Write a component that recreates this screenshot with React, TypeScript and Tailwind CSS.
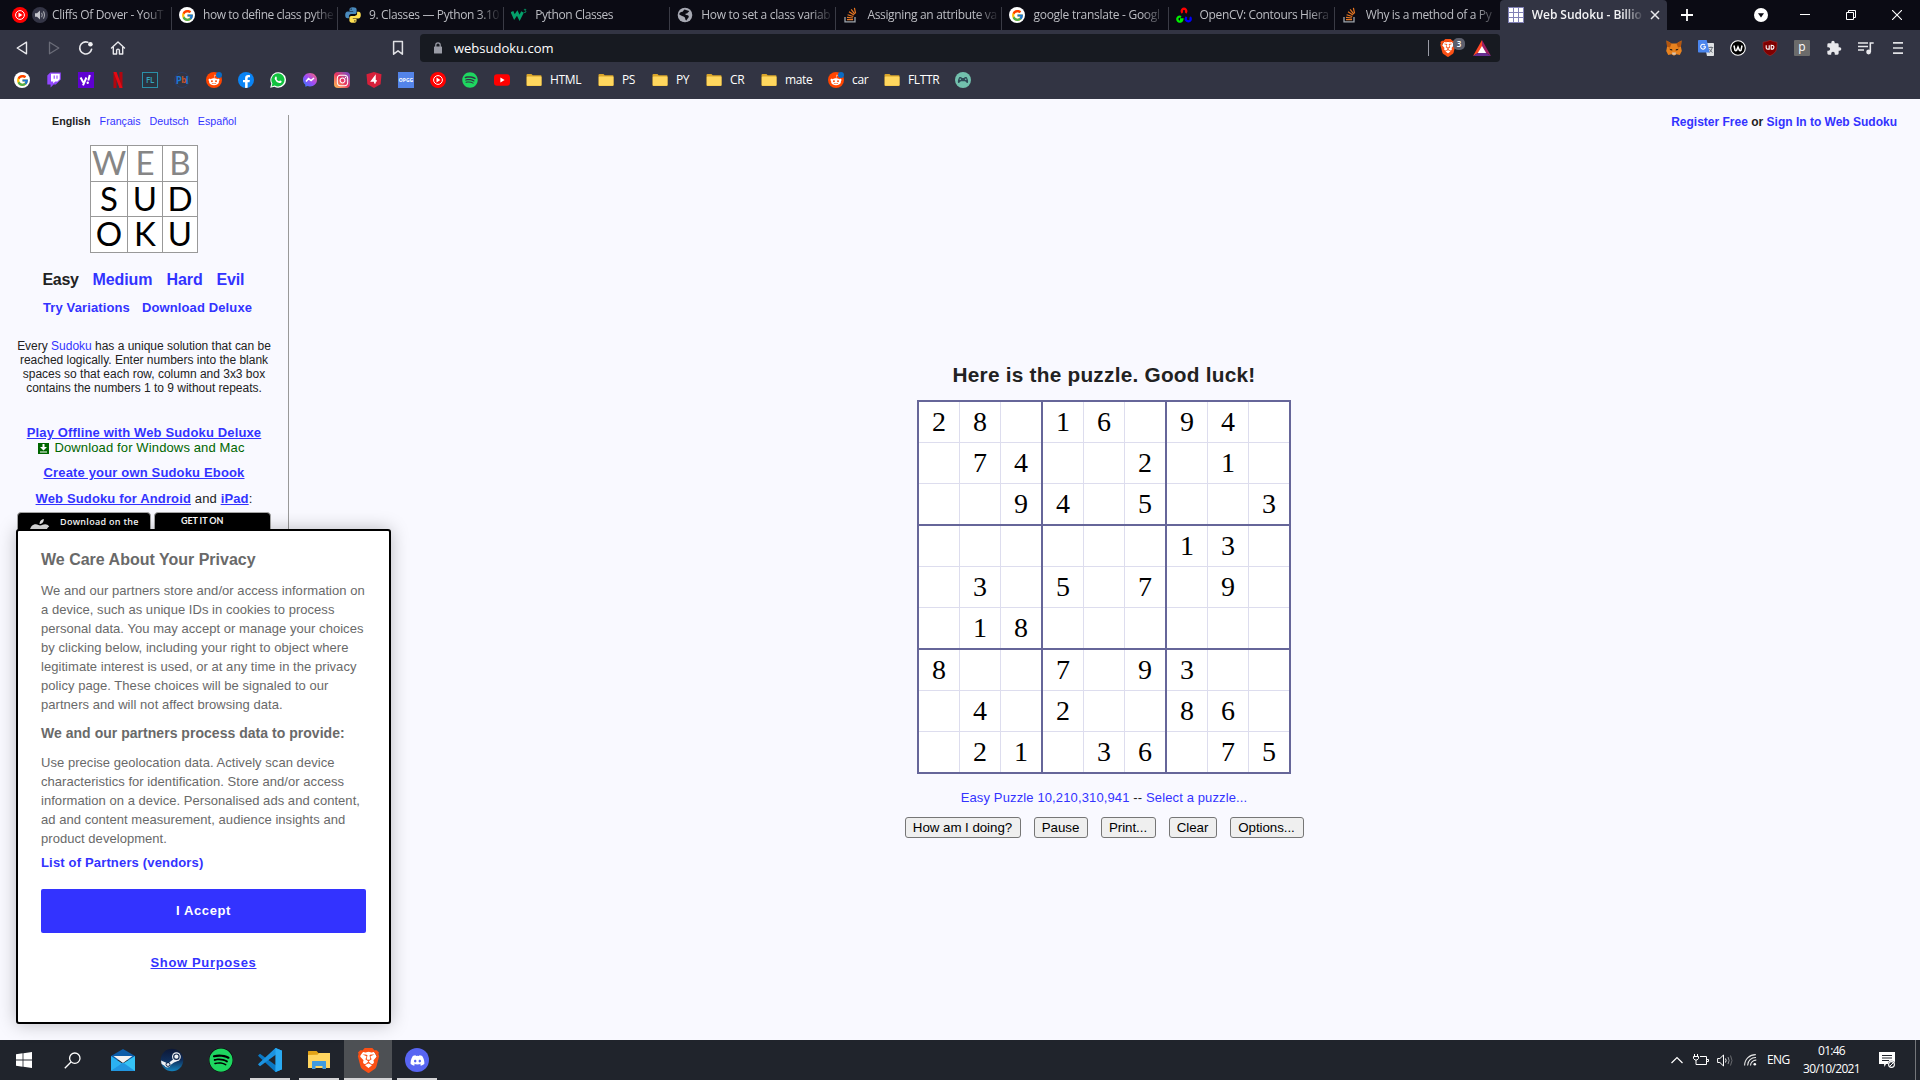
import type { ReactNode } from "react";
import { FcGoogle } from "react-icons/fc";
import {
  FaDiscord,
  FaFacebookF,
  FaInstagram,
  FaRedditAlien,
  FaSpotify,
  FaWhatsapp,
} from "react-icons/fa";
import { SiBrave } from "react-icons/si";

/* ---------- small icons ---------- */

const GoogleIcon = () => (
  <span className="flex size-4 items-center justify-center rounded-full bg-white">
    <FcGoogle size={13} />
  </span>
);

const YtMusicIcon = () => (
  <svg width="16" height="16" viewBox="0 0 16 16">
    <circle cx="8" cy="8" r="8" fill="#f00" />
    <circle cx="8" cy="8" r="4.400" fill="none" stroke="#fff" strokeWidth="1" />
    <path d="M6.500 5.600v4.800L10.400 8z" fill="#fff" />
  </svg>
);

const MutedSpeaker = () => (
  <svg width="16" height="16" viewBox="0 0 16 16">
    <circle cx="8" cy="8" r="8" fill="#343546" />
    <path d="M3 6.300h2L8 3.600v8.800L5 9.700H3z" fill="#c6c7cd" />
    <path d="M9.600 5.800q1.400 2.200 0 4.400M11.400 4.400q2.200 3.600 0 7.200" stroke="#a5a6ae" strokeWidth="1.100" fill="none" />
  </svg>
);

const PythonIcon = () => (
  <svg width="16" height="16" viewBox="0 0 16 16">
    <path d="M7.9.2C5 .2 4.500 1.400 4.500 2.300v1.700H8.200v.6H2.600C1.200 4.600.2 5.800.2 8s.9 3.300 2.200 3.300h1.500V9.400c0-1.300 1-2.300 2.300-2.300h3.600c1 0 1.800-.9 1.800-1.900V2.300C11.600 1.100 10.300.2 7.900.2zM6.100 1.400a.7.700 0 110 1.400.7.700 0 010-1.400z" fill="#4b8bbe" />
    <path d="M8.100 15.800c2.900 0 3.400-1.200 3.400-2.100V12H7.800v-.6h5.600c1.400 0 2.400-1.200 2.400-3.400s-.9-3.300-2.200-3.300h-1.500v1.900c0 1.300-1 2.300-2.300 2.300H6.200c-1 0-1.800.9-1.800 1.900v2.900c0 1.200 1.300 2.100 3.700 2.100zm1.800-1.200a.7.700 0 110-1.400.7.700 0 010 1.400z" fill="#ffe052" />
  </svg>
);

const W3Icon = () => (
  <svg width="16" height="16" viewBox="0 0 16 16">
    <path d="M1 4.600l2.400 5.400 2.800-4 2.400 4.800L11.500 5" fill="none" stroke="#04a06a" strokeWidth="2.900" />
    <path d="M12.900 2.400h2l-1 1.300q1.300.1 1.100 1.100-.4 1.100-2.100.6" fill="none" stroke="#04a06a" strokeWidth=".8" />
  </svg>
);

const GlobeIcon = () => (
  <svg width="16" height="16" viewBox="0 0 16 16">
    <circle cx="8" cy="8" r="7.300" fill="#a7a9b3" />
    <path d="M7.500 2.600C9 3 10.600 3.500 12.200 4.100c-.4 1.300-1.600 1.200-2 2.400-1.400-.2-2 .2-1.600 1.200 1.700.1 3.200.4 3.200 1.800-.2 1.800-1.900 2.300-2.400 4-1.400-.2-.9-1.900-1.700-3.200C6.400 9.300 3.900 8.800 2.300 7.600c.1-2.800 2.600-2.300 3.500-3 .4-.7 1-1.200 1.700-2z" fill="#0b0b14" />
  </svg>
);

const StackOverflowIcon = () => (
  <svg width="16" height="16" viewBox="0 0 16 16">
    <path d="M2 10v4.800h10V10" fill="none" stroke="#9fa6ac" strokeWidth="1.300" />
    <path d="M4 12.600h6M4 10.300l6 .7M4.600 7.700l5.700 1.800M6 4.800l5 3.300M8.200 2.400l3.600 4.700M11.400.8l1.200 5.500" stroke="#e87722" strokeWidth="1.200" />
  </svg>
);

const OpenCvIcon = () => (
  <svg width="16" height="16" viewBox="0 0 16 16" fill="none" strokeWidth="2.300">
    <path d="M6.500 5.800a2.300 2.300 0 113 0" stroke="#f00" />
    <path d="M5 9.900a2.500 2.500 0 101.300 2.600H4" stroke="#0e0" />
    <path d="M10.600 10a2.500 2.500 0 103.400.1" stroke="#00f" />
  </svg>
);

const SudokuFavicon = () => (
  <svg width="16" height="16" viewBox="0 0 16 16">
    <path d="M0 0h16v16H0z" fill="#8080b5" />
    <g fill="#fff">
      {[1, 6, 11].map((y) => [1, 6, 11].map((x) => <rect key={`${x}-${y}`} x={x} y={y} width="4" height="4" />))}
    </g>
  </svg>
);

const Folder = () => (
  <svg width="16" height="16" viewBox="0 0 16 16">
    <path d="M.5 3q0-1 1-1h4l1.200 1.200h8q.8 0 .8.800v9.200q0 .8-.8.800H1.300q-.8 0-.8-.8z" fill="#d9a52a" />
    <path d="M.8 5q0-.6.7-.6h13.200q.8 0 .8.600v8q0 .8-.8.800H1.500q-.7 0-.7-.8z" fill="#ffd75e" />
  </svg>
);

const RedditIcon = () => (
  <span className="relative flex size-4 items-center justify-center rounded-full bg-[#ff4500]">
    <FaRedditAlien size={12} color="#fff" />
    <span className="absolute top-0 right-0 size-[6px] rounded-full bg-[#0a6cc4]" />
  </span>
);

const TwitchIcon = () => (
  <svg width="16" height="16" viewBox="0 0 16 16">
    <path d="M4.300.5L1.300 3.400v9.200h3.300v3l3-3h2.200l5-5V.5z" fill="#9146ff" />
    <path d="M5 1.700h8.700v5.500l-2.200 2.200H9.200l-2 2v-2H5z" fill="#fff" />
    <path d="M8.200 3.600v3.200M11 3.600v3.200" stroke="#9146ff" strokeWidth="1.100" />
  </svg>
);

const YahooIcon = () => (
  <svg width="16" height="16" viewBox="0 0 16 16">
    <path d="M0 0h16v16H0z" fill="#5f01d1" />
    <path d="M2.600 5.500l2.700 5M8.400 5.500L5 13.300" stroke="#fff" strokeWidth="2" />
    <path d="M11.800 3l-1.500 5.500" stroke="#fff" strokeWidth="2" />
    <circle cx="9.700" cy="10.700" r="1.200" fill="#fff" />
  </svg>
);

const NetflixIcon = () => (
  <svg width="16" height="16" viewBox="0 0 16 16">
    <path d="M3.500 0h3v16h-3zM9.500 0h3v16h-3z" fill="#b1060f" />
    <path d="M3.500 0h3l6 16h-3z" fill="#e50914" />
  </svg>
);

const PbiIcon = () => (
  <span className="flex size-4 items-center justify-center rounded-full border border-[#2b3d63] font-['Open_Sans'] text-[10px] leading-none font-bold tracking-[-0.8px] text-[#1b78d4]">
    P<span className="text-[8px] text-[#c8552b]">b</span>I
  </span>
);

const WhatsAppIcon = () => (
  <svg width="16" height="16" viewBox="0 0 16 16">
    <path d="M.2 15.800l1.100-4.100A7.800 7.800 0 118.100 15.800a7.900 7.900 0 01-3.700-1z" fill="#fff" />
    <path d="M1.600 14.400l.8-2.900A6.600 6.600 0 118.100 14.500a6.600 6.600 0 01-3.300-.9z" fill="#12c23f" />
    <path d="M5.700 4.400q.5-.2.700.3l.5 1.200q.1.300-.5 1 .9 1.700 2.700 2.300.7-.9 1-.8l1.400.7q.3.500-.2 1.300-.9.900-2.100.6-3.300-.9-4.500-4-.2-1.600 1-2.600z" fill="#fff" />
  </svg>
);

const MessengerIcon = () => (
  <svg width="16" height="16" viewBox="0 0 16 16">
    <defs>
      <linearGradient id="msg" x1="0" y1="1" x2="1" y2="0">
        <stop offset="0" stopColor="#2a7cff" />
        <stop offset=".5" stopColor="#a24bf5" />
        <stop offset="1" stopColor="#ff6a70" />
      </linearGradient>
    </defs>
    <path d="M8 1C4 1 1 3.900 1 7.700c0 2 .8 3.700 2.200 4.900l.2 2.200 2-.8c.8.300 1.700.4 2.600.4 4 0 7-2.900 7-6.700S12 1 8 1z" fill="url(#msg)" />
    <path d="M4 9.600l2.500-3 2.600 2L12 6" fill="none" stroke="#fff" strokeWidth="1.500" />
  </svg>
);

const InstagramIcon = () => (
  <span className="flex size-4 items-center justify-center rounded bg-linear-to-bl from-[#6a3fd0] via-[#e8305f] to-[#fdc44d]">
    <FaInstagram size={13} color="#fff" />
  </span>
);

const FourShield = () => (
  <svg width="16" height="16" viewBox="0 0 16 16">
    <path d="M8 0l7.500 2.300-.9 10L8 16l-6.600-3.700-.9-10z" fill="#d6203a" />
    <path d="M8.900 11.400V4.900L5.900 8.900h4.800" fill="none" stroke="#fff" strokeWidth="1.700" />
  </svg>
);

const YoutubeIcon = () => (
  <svg width="16" height="16" viewBox="0 0 16 16">
    <rect y="2.300" width="16" height="11.400" rx="3" fill="#f00" />
    <path d="M6.400 5.600v4.800L10.600 8z" fill="#fff" />
  </svg>
);

const GamepadIcon = () => (
  <svg width="16" height="16" viewBox="0 0 16 16">
    <circle cx="8" cy="8" r="8" fill="#72c0ad" />
    <path d="M4.500 5h1.800l.5.900h2.400l.5-.9h1.800c1.500 1.800 2.200 5.600 1 6-1.200.2-1.600-1.700-2.700-1.700H6.200C5.100 9.300 4.700 11.200 3.500 11c-1.200-.4-.5-4.200 1-6z" fill="#2f4a57" />
    <circle cx="5.300" cy="7.300" r=".8" fill="#72c0ad" />
    <circle cx="10.700" cy="7.300" r=".8" fill="#72c0ad" />
  </svg>
);

const BraveLogo = ({ size }: { size: number }) => (
  <span className="relative flex items-center justify-center">
    <svg className="absolute" width={size * 0.7} height={size * 0.8} viewBox="0 0 14 16">
      <path d="M2 1h10l2 4-3 8-4 3-4-3-3-8z" fill="#fff" />
    </svg>
    <SiBrave className="relative" size={size} color="#fb5015" />
  </span>
);

/* ---------- tab strip ---------- */

const tabs: { icon: ReactNode; title: string; ls: string }[] = [
  { icon: <GoogleIcon />, title: "how to define class pythe", ls: "tracking-[-0.46px]" },
  { icon: <PythonIcon />, title: "9. Classes — Python 3.10", ls: "tracking-[-0.37px]" },
  { icon: <W3Icon />, title: "Python Classes", ls: "tracking-[-0.41px]" },
  { icon: <GlobeIcon />, title: "How to set a class variab", ls: "tracking-[-0.33px]" },
  { icon: <StackOverflowIcon />, title: "Assigning an attribute va", ls: "tracking-[-0.33px]" },
  { icon: <GoogleIcon />, title: "google translate - Googl", ls: "tracking-[-0.27px]" },
  { icon: <OpenCvIcon />, title: "OpenCV: Contours Hiera", ls: "tracking-[-0.35px]" },
  { icon: <StackOverflowIcon />, title: "Why is a method of a Py", ls: "tracking-[-0.35px]" },
];

const fade = "[mask-image:linear-gradient(to_right,black_82%,transparent)]";

function TabStrip() {
  return (
    <div className="flex h-[30px] bg-[#0b0b14] text-xs text-[#bcbdc3]">
      <div className="flex w-[171px] items-center pl-3">
        <YtMusicIcon />
        <span className="ml-1">
          <MutedSpeaker />
        </span>
        <span className={`ml-1 w-[114px] overflow-hidden tracking-[-0.33px] whitespace-nowrap ${fade}`}>Cliffs Of Dover - YouT</span>
      </div>
      {tabs.map((t) => (
        <div key={t.title} className="flex w-[166.1px] items-center">
          <span className="mt-[7px] h-[23px] w-px bg-[#3a3b45]" />
          <span className="ml-[7px]">{t.icon}</span>
          <span className={`ml-2 w-[133px] overflow-hidden whitespace-nowrap ${t.ls} ${fade}`}>{t.title}</span>
        </div>
      ))}
      <div className="flex w-[167px] items-center rounded-t bg-[#323443] pl-2">
        <SudokuFavicon />
        <span className={`ml-2 w-[112px] overflow-hidden font-semibold tracking-[-0.06px] whitespace-nowrap text-[#f2f2f4] ${fade}`}>Web Sudoku - Billio</span>
        <svg className="ml-[6px]" width="10" height="10" viewBox="0 0 10 10">
          <path d="M1 1l8 8M9 1L1 9" stroke="#e8e8ec" strokeWidth="1.500" />
        </svg>
      </div>
      <div className="flex flex-1 items-center">
        <svg className="ml-[14px]" width="12" height="12" viewBox="0 0 12 12">
          <path d="M6 0v12M0 6h12" stroke="#fff" strokeWidth="1.800" />
        </svg>
        <svg className="ml-[61px]" width="14" height="14" viewBox="0 0 14 14">
          <circle cx="7" cy="7" r="7" fill="#fff" />
          <path d="M4 5.200h6L7 9.400z" fill="#0b0b14" />
        </svg>
        <svg className="ml-8" width="10" height="10" viewBox="0 0 10 10">
          <path d="M0 4.500h10" stroke="#fff" />
        </svg>
        <svg className="ml-9" width="10" height="10" viewBox="0 0 10 10" fill="none" stroke="#fff">
          <path d="M.5 2.500h7v7h-7zM2.500 2.500v-2h7v7h-2" />
        </svg>
        <svg className="ml-9" width="10" height="10" viewBox="0 0 10 10">
          <path d="M0 0l10 10M10 0L0 10" stroke="#fff" strokeWidth="1.100" />
        </svg>
      </div>
    </div>
  );
}

/* ---------- toolbar ---------- */

function Toolbar() {
  return (
    <div className="flex h-9 items-center">
      <svg className="ml-[14px]" width="16" height="16" viewBox="0 0 16 16">
        <path d="M12.500 2.200v11.600L3.200 8z" fill="none" stroke="#e8e8ec" strokeWidth="1.400" strokeLinejoin="round" />
      </svg>
      <svg className="ml-4" width="16" height="16" viewBox="0 0 16 16">
        <path d="M3.500 2.200v11.600L12.800 8z" fill="none" stroke="#6a6c78" strokeWidth="1.300" strokeLinejoin="round" />
      </svg>
      <svg className="ml-4" width="16" height="16" viewBox="0 0 16 16">
        <path d="M9.800 2.300a6 6 0 103.800 7" fill="none" stroke="#e8e8ec" strokeWidth="1.600" strokeLinecap="round" />
        <circle cx="12.400" cy="4.200" r="2.300" fill="#f2f2f4" />
      </svg>
      <svg className="ml-4" width="16" height="16" viewBox="0 0 16 16">
        <path d="M1.500 8L8 2l6.500 6M3.300 7v7h3.300v-3.500a1.400 1.400 0 012.800 0V14h3.300V7" fill="none" stroke="#e8e8ec" strokeWidth="1.400" strokeLinejoin="round" strokeLinecap="round" />
      </svg>
      <svg className="ml-[264px]" width="16" height="16" viewBox="0 0 16 16">
        <path d="M3.600 1.600h8.800v12.600L8 10.800l-4.400 3.400z" fill="none" stroke="#e0e0e4" strokeWidth="1.500" strokeLinejoin="round" />
      </svg>
      <div className="ml-[14px] flex h-7 w-[1080px] items-center rounded bg-[#171a21]">
        <svg className="ml-[14px]" width="8" height="12" viewBox="0 0 8 12">
          <path d="M1.800 5V3a2.200 2.200 0 014.400 0v2" fill="none" stroke="#9a9ca6" strokeWidth="1.200" />
          <rect y="4.500" width="8" height="7" rx=".6" fill="#9a9ca6" />
        </svg>
        <span className="mt-px ml-3 text-[13px] text-white">websudoku.com</span>
        <span className="ml-auto h-4 w-px bg-[#9a9ca6]" />
        <span className="relative ml-[10px] flex">
          <BraveLogo size={18} />
          <span className="absolute -top-[1px] left-[14px] flex size-3 items-center justify-center rounded-[5px] bg-[#5c5f6c] text-[8px] leading-none font-semibold text-white">3</span>
        </span>
        <svg className="mr-[9px] ml-4" width="18" height="16" viewBox="0 0 18 16">
          <path d="M9 0L0 16l9-5.500z" fill="#ff4724" />
          <path d="M9 0l9 16-9-5.500z" fill="#9e1f63" />
          <path d="M0 16h18l-9-5.500z" fill="#662d91" />
          <path d="M9 6l4.200 7H4.800z" fill="#fff" />
        </svg>
      </div>
      <div className="mr-[14px] ml-auto flex gap-4">
        <svg width="16" height="16" viewBox="0 0 16 16">
          <path d="M.5.5l5 3h5l5-3-.6 6 .9 4.500-2 4-3.300-.8L8 15.800l-2.500-1.600-3.300.8-2-4 .9-4.500z" fill="#e8821e" />
          <path d="M.5.5l5 3L4 7.500 1 6.700zM15.500.5l-5 3L12 7.500l3-.8z" fill="#b4560f" />
          <path d="M3.300 8.700l2.800.5.300 1.300-1.800-.2zM12.700 8.700l-2.800.5-.3 1.300 1.800-.2z" fill="#1f1a17" />
          <path d="M6 12.500h4l-.5 2.300h-3z" fill="#d9c3b0" />
        </svg>
        <svg width="16" height="16" viewBox="0 0 16 16">
          <path d="M6 3h9.200q.8 0 .8.800V15.200q0 .8-.8.800H9z" fill="#dfe1e4" />
          <path d="M.8 0h7.900l3 12.500H.8q-.8 0-.8-.8V.8Q0 0 .8 0z" fill="#4b86ee" />
          <path d="M7 5.200a2.400 2.400 0 10.500 1.500H5.300" fill="none" stroke="#fff" strokeWidth="1.100" />
          <path d="M10.500 7.500h4.700M13 6.500v1M14.300 7.500q-.5 3-3 5M11.500 9q1 2.300 3 3.500" stroke="#6e737b" fill="none" />
        </svg>
        <svg width="16" height="16" viewBox="0 0 16 16">
          <circle cx="8" cy="8" r="7.300" fill="#000" stroke="#fff" strokeWidth="1.100" />
          <path d="M4 5.500l1 4.800q.8 1 1.600 0L8 7l1.400 3.300q.8 1 1.600 0l1-4.800" fill="none" stroke="#fff" strokeWidth="1.500" />
        </svg>
        <svg width="16" height="16" viewBox="0 0 16 16">
          <path d="M8 .3Q11.500 2 15 2.200q.3 6-1.200 9Q12 14.200 8 15.800q-4-1.600-5.800-4.600Q.7 8.200 1 2.200 4.500 2 8 .3z" fill="#800000" stroke="#a33" strokeWidth=".5" />
          <path d="M4.200 5.200V8q0 1.100 1.600 1.100H7.200V5.200M9.200 5.200v3.900q2.700.2 2.700-2 0-2-2.700-1.900z" fill="none" stroke="#fff" strokeWidth="1.100" />
        </svg>
        <span className="flex size-4 items-center justify-center rounded-[1px] bg-[#6b6b6b] pb-[2px] text-xs leading-none text-white">p</span>
        <svg width="16" height="16" viewBox="0 0 24 24">
          <path d="M20.500 11H19V7a2 2 0 00-2-2h-4V3.500a2.500 2.500 0 00-5 0V5H4a2 2 0 00-2 2v3.800h1.500a2.700 2.700 0 010 5.400H2V20a2 2 0 002 2h3.800v-1.500a2.700 2.700 0 015.400 0V22H17a2 2 0 002-2v-4h1.500a2.500 2.500 0 000-5z" fill="#e8e8ec" />
        </svg>
        <svg width="16" height="16" viewBox="0 0 16 16">
          <path d="M0 3h10M0 6.500h10M0 10h6" stroke="#e8e8ec" strokeWidth="1.500" />
          <path d="M12.300 12V3h3.400" fill="none" stroke="#e8e8ec" strokeWidth="1.600" />
          <circle cx="10.600" cy="12" r="2.400" fill="#e8e8ec" />
        </svg>
        <svg width="16" height="16" viewBox="0 0 16 16">
          <path d="M3 2.800h10M3 8h10M3 13.200h10" stroke="#e0e0e4" strokeWidth="1.700" />
        </svg>
      </div>
    </div>
  );
}

/* ---------- bookmarks ---------- */

const bookmarkIcons: ReactNode[] = [
  <GoogleIcon />,
  <TwitchIcon />,
  <YahooIcon />,
  <NetflixIcon />,
  <span className="flex size-4 items-center justify-center border border-[#2b90a8] bg-[#2a3340] text-[8px] leading-none font-semibold text-[#35a5be]">FL</span>,
  <PbiIcon />,
  <RedditIcon />,
  <span className="flex size-4 items-end justify-center overflow-hidden rounded-full bg-[#0a84f5]">
    <FaFacebookF size={13} color="#fff" />
  </span>,
  <WhatsAppIcon />,
  <MessengerIcon />,
  <InstagramIcon />,
  <FourShield />,
  <span className="flex size-4 items-center justify-center bg-[#5383e8] text-[5px] leading-none font-bold tracking-[0px] text-white">OPGG</span>,
  <YtMusicIcon />,
  <FaSpotify size={16} color="#1ed760" />,
  <YoutubeIcon />,
];

const folders: { name: string; w: string; reddit?: boolean }[] = [
  { name: "HTML", w: "w-[72px]" },
  { name: "PS", w: "w-[54px]" },
  { name: "PY", w: "w-[54px]" },
  { name: "CR", w: "w-[55px]" },
  { name: "mate", w: "w-[67px]" },
  { name: "car", w: "w-[56px]", reddit: true },
  { name: "FLTTR", w: "w-[71px]" },
];

function Bookmarks() {
  return (
    <div className="flex h-[33px] items-center pb-[5px] pl-[14px] text-xs tracking-[-0.35px] text-white">
      <div className="mr-4 flex gap-4">
        {bookmarkIcons.map((icon, i) => (
          <span key={i} className="flex size-4 items-center justify-center">
            {icon}
          </span>
        ))}
      </div>
      {folders.map((f) => (
        <span key={f.name} className={`flex items-center gap-2 ${f.w}`}>
          {f.reddit ? <RedditIcon /> : <Folder />}
          {f.name}
        </span>
      ))}
      <GamepadIcon />
    </div>
  );
}

/* ---------- page ---------- */

const logo = ["WEB", "SUD", "OKU"];

function SidePanel() {
  return (
    <aside className="flex h-full w-72 flex-col items-center pt-[15px] text-[#222]">
      <div className="flex w-full gap-[9px] pl-[52px] text-[10.7px] leading-[14px] text-[#33f]">
        <b className="text-[#222]">English</b>
        <span>Français</span>
        <span>Deutsch</span>
        <span>Español</span>
      </div>
      <div className="mt-[17px] grid grid-cols-[36px_34px_34px] grid-rows-[35px_34px_35px] gap-px border border-[#999] bg-[#999] font-['Lato'] text-[33px] leading-[32px]">
        {logo.map((word, r) =>
          word.split("").map((c, i) => (
            <span key={`${r}${i}`} className={`flex justify-center bg-white ${r === 0 ? "text-[#868686]" : "text-black"}`}>
              {c}
            </span>
          )),
        )}
      </div>
      <div className="mt-[17px] flex w-full pl-[42.500px] text-[16px] leading-5 font-bold tracking-[-0.1px] text-[#33f]">
        <span className="w-[50px] tracking-[-0.3px] text-[#222]">Easy</span>
        <span className="w-[74px]">Medium</span>
        <span className="w-[50px]">Hard</span>
        <span className="tracking-[-0.2px]">Evil</span>
      </div>
      <div className="mt-[10px] flex w-full gap-3 pl-[43px] text-[13px] leading-4 font-bold tracking-[0.12px] text-[#33f]">
        <span>Try Variations</span>
        <span>Download Deluxe</span>
      </div>
      <p className="mt-[23px] text-center text-xs leading-[14px] tracking-[-0.01px]">
        Every <span className="text-[#33f]">Sudoku</span> has a unique solution that can be
        <br />
        reached logically. Enter numbers into the blank
        <br />
        spaces so that each row, column and 3x3 box
        <br />
        contains the numbers 1 to 9 without repeats.
      </p>
      <a className="mt-[30px] text-[13px] leading-4 font-bold tracking-[0.144px] text-[#33f] underline">Play Offline with Web Sudoku Deluxe</a>
      <div className="-mt-px flex items-center gap-[5px] pr-[5px] text-[13px] leading-4 tracking-[0.13px] text-[#060]">
        <svg width="11" height="11" viewBox="0 0 11 11">
          <path d="M0 0h11v11H0z" fill="#060" />
          <path d="M4.500 1h2v3H9L5.500 7.500 2 4h2.500zM2 8.500h7v1H2z" fill="#fff" />
        </svg>
        Download for Windows and Mac
      </div>
      <a className="mt-[9px] text-[13px] leading-4 font-bold tracking-[0.162px] text-[#33f] underline">Create your own Sudoku Ebook</a>
      <div className="mt-[10px] text-[13px] leading-4 tracking-[0.14px]">
        <b className="text-[#33f] underline">Web Sudoku for Android</b> and <b className="text-[#33f] underline">iPad</b>:
      </div>
      <div className="mt-[5px] flex gap-[3px] text-white">
        <div className="flex h-10 w-[134px] rounded border border-[#a6a6a6] bg-black pl-[11px]">
          <svg className="mt-[6px]" width="22" height="24" viewBox="0 0 22 24">
            <path d="M10.500 5c0-3 2-4.700 4.300-5 .2 3-2 5-4.300 5zM11 6.500c2-.1 3-1.300 5.200-1.300 1.500 0 3 .8 4 2.200-4 2.500-3.200 7.500.8 9-1.200 3.500-3 6-5 6-1.800 0-2.400-1-4.600-1s-3 1-4.600 1c-3 0-6-5.500-6-10 0-4.600 3-7.200 6-7.200 2 0 3.200 1.300 4.200 1.300z" fill="#e6e6e6" />
          </svg>
          <span className="mt-[3px] ml-[9px] font-['Open_Sans'] text-[9px] leading-3 font-semibold tracking-[0.3px] whitespace-nowrap">Download on the</span>
        </div>
        <div className="h-10 w-[117px] rounded border border-[#a6a6a6] bg-black pl-[26px] font-['Lato'] text-[9px] leading-[15px] font-bold tracking-[-0.1px]">GET IT ON</div>
      </div>
    </aside>
  );
}

const puzzle = [
  "28 16 94 ",
  " 74  2 1 ",
  "  94 5  3",
  "      13 ",
  " 3 5 7 9 ",
  " 18      ",
  "8  7 93  ",
  " 4 2  86 ",
  " 21 36 75",
];

function SudokuGrid() {
  return (
    <div className="grid grid-cols-3 gap-[2px] border-2 border-[#669] bg-[#669]">
      {[0, 1, 2, 3, 4, 5, 6, 7, 8].map((b) => (
        <div key={b} className="grid grid-cols-[40px_40px_40px] grid-rows-[40px_40px_40px] gap-px bg-[#dde]">
          {[0, 1, 2, 3, 4, 5, 6, 7, 8].map((c) => (
            <span key={c} className="flex items-center justify-center bg-white font-['Liberation_Serif'] text-[28px] leading-none text-black">
              {puzzle[Math.floor(b / 3) * 3 + Math.floor(c / 3)][(b % 3) * 3 + (c % 3)]}
            </span>
          ))}
        </div>
      ))}
    </div>
  );
}

const buttons = [
  { label: "How am I doing?", w: "w-[116px]" },
  { label: "Pause", w: "w-[54px]" },
  { label: "Print...", w: "w-[55px]" },
  { label: "Clear", w: "w-[48px]" },
  { label: "Options...", w: "w-[74px]" },
];

function PuzzleArea() {
  return (
    <main className="flex flex-1 flex-col items-center pr-px">
      <div className="mt-4 self-end pr-[22px] text-xs leading-[14px] font-bold text-[#33f]">
        Register Free <span className="text-[#222]">or</span> Sign In to Web Sudoku
      </div>
      <h1 className="mt-[234px] text-[20.8px] leading-6 font-bold tracking-[0.24px] text-[#222]">Here is the puzzle. Good luck!</h1>
      <div className="mt-[13px]">
        <SudokuGrid />
      </div>
      <div className="mt-4 text-[13px] leading-4 tracking-[0.13px] text-[#33f]">
        Easy Puzzle 10,210,310,941 <span className="text-[#222]">--</span> Select a puzzle...
      </div>
      <div className="mt-[11px] flex gap-[13px]">
        {buttons.map((b) => (
          <button key={b.label} className={`h-[21px] rounded-[3px] border border-[#767676] bg-[#efefef] text-[13.33px] leading-[19px] tracking-[-0.05px] whitespace-nowrap text-black ${b.w}`}>
            {b.label}
          </button>
        ))}
      </div>
    </main>
  );
}

function PrivacyDialog() {
  return (
    <div className="absolute top-[430px] left-4 h-[495px] w-[375px] rounded-[3px] border-2 border-black bg-white pt-[19px] pl-[23px] text-[13px] leading-[19px] text-[#696969] shadow-[0_0_18px_rgba(0,0,0,0.25)]">
      <h2 className="text-[16px] leading-5 font-bold">We Care About Your Privacy</h2>
      <p className="mt-[11px] tracking-[0.045px]">
        We and our partners store and/or access information on
        <br />
        a device, such as unique IDs in cookies to process
        <br />
        personal data. You may accept or manage your choices
        <br />
        by clicking below, including your right to object where
        <br />
        legitimate interest is used, or at any time in the privacy
        <br />
        policy page. These choices will be signaled to our
        <br />
        partners and will not affect browsing data.
      </p>
      <h3 className="mt-[10px] text-[14px] font-bold tracking-[0.03px]">We and our partners process data to provide:</h3>
      <p className="mt-[10px] tracking-[0.045px]">
        Use precise geolocation data. Actively scan device
        <br />
        characteristics for identification. Store and/or access
        <br />
        information on a device. Personalised ads and content,
        <br />
        ad and content measurement, audience insights and
        <br />
        product development.
      </p>
      <a className="mt-[5px] block font-bold tracking-[0.165px] text-[#33f]">List of Partners (vendors)</a>
      <button className="mt-[17px] block h-11 w-[325px] rounded-[2px] bg-[#33f] pb-[2px] text-[13px] font-bold tracking-[0.61px] text-white">I Accept</button>
      <div className="mt-5 w-[325px] text-center font-bold tracking-[0.65px] text-[#33f] underline">Show Purposes</div>
    </div>
  );
}

/* ---------- taskbar ---------- */

const apps: { key: string; icon: ReactNode; state: string; bar: string }[] = [
  {
    key: "start",
    state: "",
    bar: "",
    icon: (
      <svg width="16" height="16" viewBox="0 0 16 16">
        <path d="M0 2.200l6.600-.9v6.300H0zM7.400 1.200L16 0v7.600H7.400zM0 8.400h6.600v6.300L0 13.800zM7.400 8.400H16V16l-8.600-1.200z" fill="#fff" />
      </svg>
    ),
  },
  {
    key: "search",
    state: "-ml-px",
    bar: "",
    icon: (
      <svg width="17" height="17" viewBox="0 0 17 17" fill="none" stroke="#fff" strokeWidth="1.300">
        <circle cx="10.800" cy="6.200" r="5.200" />
        <path d="M7 10L.8 16.200" />
      </svg>
    ),
  },
  {
    key: "mail",
    state: "ml-[2px]",
    bar: "",
    icon: (
      <svg width="24" height="24" viewBox="0 0 24 24">
        <path d="M0 8l12-7 12 7v4H0z" fill="#0c5ca8" />
        <path d="M2.500 8h19L12 15z" fill="#f2f2f2" />
        <path d="M0 8l12 8-12 7z" fill="#2bb2f0" />
        <path d="M24 8L0 23h24z" fill="#35c2f5" />
        <path d="M0 23l12-8.500L24 23z" fill="#2196e0" />
      </svg>
    ),
  },
  {
    key: "steam",
    state: "",
    bar: "",
    icon: (
      <svg width="24" height="24" viewBox="0 0 24 24">
        <defs>
          <linearGradient id="steam" x1="0" y1="0" x2="0" y2="1">
            <stop offset="0" stopColor="#0d1836" />
            <stop offset=".5" stopColor="#0f2c58" />
            <stop offset="1" stopColor="#1385c0" />
          </linearGradient>
        </defs>
        <circle cx="12" cy="12" r="11.300" fill="url(#steam)" />
        <path d="M1 12.500l7 3 5-4 2-3.500 4.500 4.300-5.500 2.200-3.500 2.500a3.200 3.200 0 01-6 .8L1.600 16z" fill="#eef1f4" />
        <circle cx="16.400" cy="8.700" r="4.400" fill="#eef1f4" />
        <circle cx="16.400" cy="8.700" r="2.700" fill="#eef1f4" stroke="#10264c" strokeWidth="1.200" />
        <circle cx="8" cy="16.400" r="2" fill="none" stroke="#10264c" />
      </svg>
    ),
  },
  {
    key: "spotify",
    state: "",
    bar: "",
    icon: (
      <span className="flex size-6 rounded-full bg-black">
        <FaSpotify size={24} color="#1ed760" />
      </span>
    ),
  },
  {
    key: "code",
    state: "",
    bar: "w-10",
    icon: (
      <svg width="24" height="24" viewBox="0 0 24 24">
        <path d="M17.500 0L24 2.800v18.400L17.500 24 1 8.800 0 7.500l2-1.700L18 17.500z" fill="#0a78c4" />
        <path d="M17.500 24L24 21.200V2.800L17.500 0 1 15.200 0 16.500l2 1.700L18 6.500z" fill="#1b93e0" />
        <path d="M17.500 0L24 2.800v18.400L17.500 24z" fill="#2aaaf2" />
      </svg>
    ),
  },
  {
    key: "files",
    state: "",
    bar: "w-10",
    icon: (
      <svg width="22" height="20" viewBox="0 0 22 20">
        <path d="M0 1.500Q0 1 .6 1h8l1.800 2H22v4H0z" fill="#e2a317" />
        <path d="M0 5l9.500-.2L11 3h11v15H0z" fill="#ffd560" />
        <path d="M4 19v-7.500Q4 11 4.600 11h12.800q.6 0 .6.500V19h-3.500v-3h-7v3z" fill="#3f9be0" />
      </svg>
    ),
  },
  { key: "brave", state: "bg-[#4d5054]", bar: "w-full", icon: <BraveLogo size={25} /> },
  {
    key: "discord",
    state: "",
    bar: "w-10",
    icon: (
      <span className="flex size-6 items-center justify-center rounded-full bg-[#5865f2]">
        <FaDiscord size={15} color="#fff" />
      </span>
    ),
  },
];

function Taskbar() {
  return (
    <footer className="flex h-10 bg-[#20242c] font-['Open_Sans',sans-serif] text-xs text-white">
      <div className="flex gap-px">
        {apps.map((a) => (
          <div key={a.key} className={`relative flex h-10 w-12 items-center justify-center ${a.state}`}>
            {a.icon}
            {a.bar && (
              <span className="absolute inset-x-0 bottom-0 flex justify-center">
                <span className={`h-[2px] bg-[#d4d4d6] ${a.bar}`} />
              </span>
            )}
          </div>
        ))}
      </div>
      <div className="ml-auto flex items-center">
        <svg width="12" height="8" viewBox="0 0 12 8">
          <path d="M.5 7L6 1.500 11.500 7" fill="none" stroke="#fff" strokeWidth="1.200" />
        </svg>
        <svg className="ml-[10px]" width="16" height="12" viewBox="0 0 16 12" fill="none" stroke="#fff">
          <path d="M1.500 0v2.500M4.500 0v2.500M.5 2.500h5v2L4 6H2L.5 4.500zM3 6v4.500h10.500v-8H7M14 5.500h1.500v2H14" />
        </svg>
        <svg className="ml-[8px]" width="17" height="13" viewBox="0 0 17 13" fill="none" stroke="#fff">
          <path d="M.6 4.500h2.300L6.500 1v11L2.900 8.500H.6z" />
          <path d="M8.500 4.500q1.200 2 0 4" />
          <path d="M11 3q2.200 3.500 0 7" stroke="#9a9ca0" />
          <path d="M13.500 1.500q3 5 0 10" stroke="#6a6c70" />
        </svg>
        <svg className="ml-[10px]" width="14" height="12" viewBox="0 0 14 12" fill="none" stroke="#e8e8e8" strokeWidth="1.100">
          <path d="M.6 11.500A11 11 0 0111.800.6M3.600 11.500a8 8 0 018.400-8M6.500 11.500a5.500 5.500 0 015.800-5.400" />
          <circle cx="10.800" cy="10.300" r="1.300" fill="#fff" stroke="none" />
        </svg>
        <span className="ml-[9px] w-[23px] tracking-[-0.64px]">ENG</span>
        <div className="ml-[13px] flex w-[57px] flex-col text-center leading-[18px] whitespace-nowrap">
          <span className="tracking-[-0.75px]">01:46</span>
          <span className="tracking-[-0.67px]">30/10/2021</span>
        </div>
        <svg className="ml-[19px]" width="17" height="17" viewBox="0 0 17 17">
          <path d="M0 0h16v12H7l-1.500 3L5 12H0z" fill="#fff" />
          <path d="M3 3.500h10M3 6h10M3 8.500h7" stroke="#20242c" />
          <circle cx="12.500" cy="12.500" r="3.700" fill="#20242c" />
          <circle cx="12.500" cy="12.500" r="2.900" fill="none" stroke="#fff" strokeWidth="1.100" />
          <path d="M10.500 14.500l4-4" stroke="#fff" />
        </svg>
        <span className="mr-1 ml-[19px] h-10 w-px bg-[#74767a]" />
      </div>
    </footer>
  );
}

export default function App() {
  return (
    <div className="flex h-[1080px] w-[1920px] flex-col overflow-hidden bg-[#f9f9ff] font-['Liberation_Sans',sans-serif]">
      <header className="h-[99px] bg-[#323443] font-['Open_Sans',sans-serif]">
        <TabStrip />
        <Toolbar />
        <Bookmarks />
      </header>
      <section className="relative flex h-[941px]">
        <SidePanel />
        <div className="mt-4 h-[900px] w-px bg-[#999]" />
        <PuzzleArea />
        <PrivacyDialog />
      </section>
      <Taskbar />
    </div>
  );
}
